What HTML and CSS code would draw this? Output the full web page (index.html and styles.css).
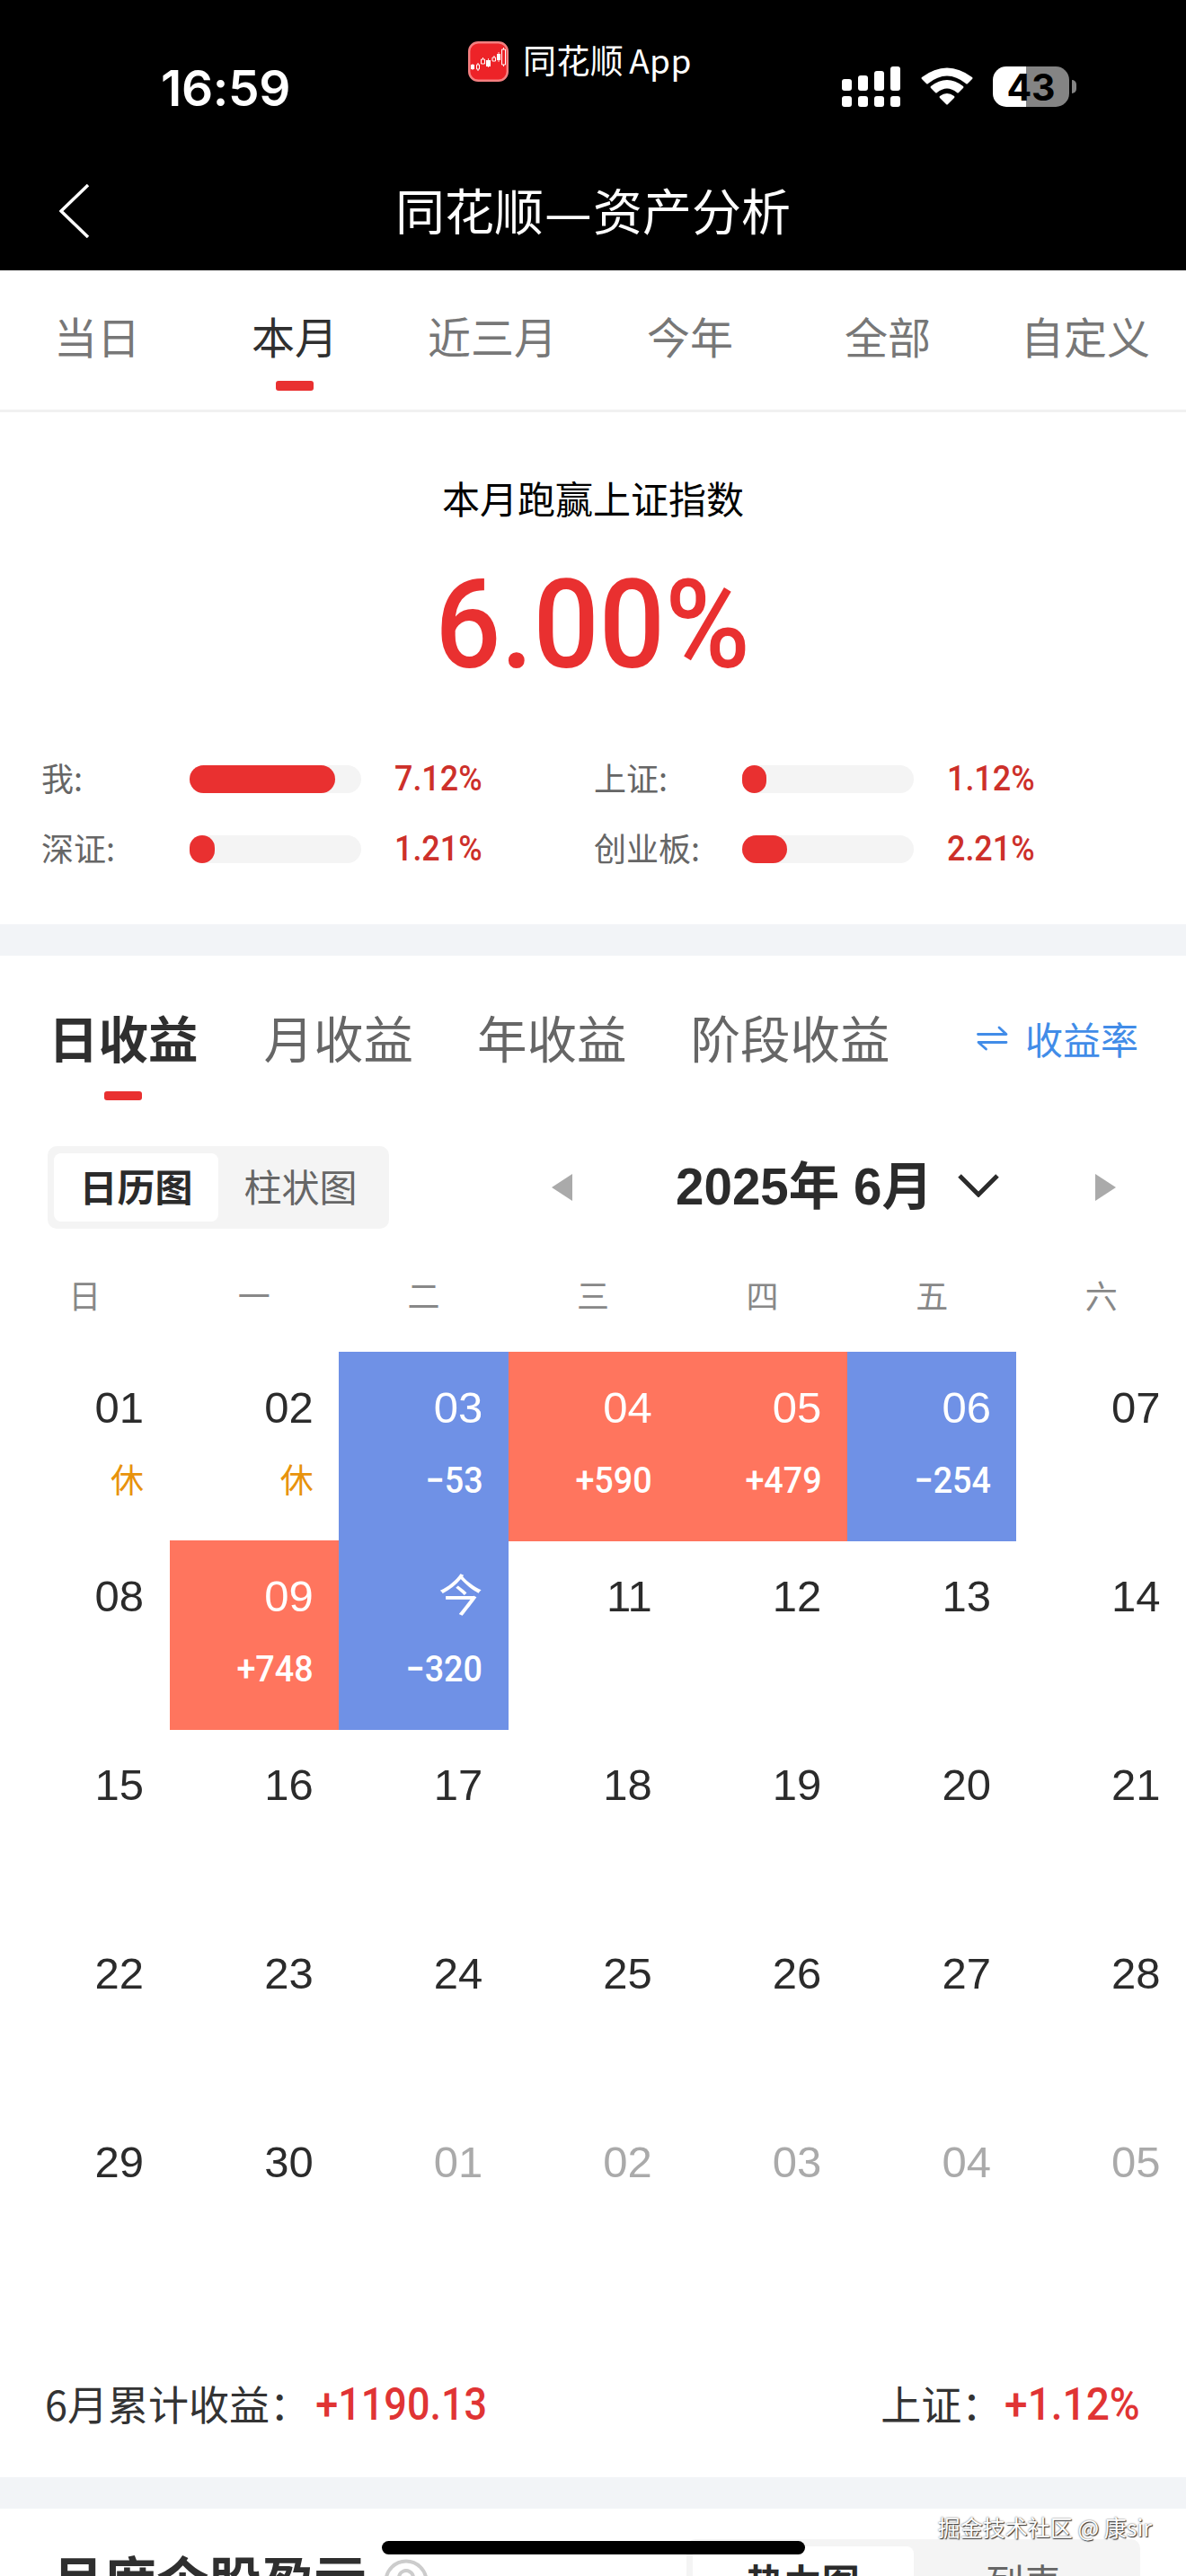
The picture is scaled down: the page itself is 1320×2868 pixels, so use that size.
FILE: index.html
```html
<!DOCTYPE html>
<html lang="zh-CN">
<head>
<meta charset="utf-8">
<title>同花顺—资产分析</title>
<link rel="stylesheet" href="styles.css">
</head>
<body>
<div class="screen">
  <header class="top">
    <div class="status">
      <div class="clock">16:59</div>
      <div class="island">
        <svg class="app-logo" viewBox="0 0 45 45">
          <rect x="1.2" y="1.2" width="42.6" height="42.6" rx="10" fill="#ed2328" stroke="#f47f80" stroke-width="2.4"/>
          <g fill="#fff"><path d="M3 26h4v5H3zM20 21h5v7h-5zM32 14h4v7h-4z"/><path d="M5 25v7M22.500 19v10M34 12v11" stroke="#fff" stroke-width=".8"/></g>
          <g fill="none" stroke="#fff" stroke-width="1"><path d="M9.500 26h3v5h-3zM14.500 20h4v5h-4zM27 18h3.500v4h-3.500zM37.500 9h4v17h-4zM16.500 18v2M29 16v2M39.500 7v2M39.500 26v2M11 24v2M11 31v2"/></g>
        </svg>
        <span>同花顺<i class="thin"></i>App</span>
      </div>
      <div class="indicators">
        <svg class="signal" viewBox="0 0 65 45" fill="#fff">
          <rect x="0" y="14" width="11" height="13" rx="3"/><rect x="18" y="10" width="11" height="17" rx="3"/><rect x="36" y="5" width="11" height="22" rx="3"/><rect x="54" y="0" width="11" height="27" rx="3"/>
          <rect x="0" y="33" width="11" height="12" rx="3"/><rect x="18" y="33" width="11" height="12" rx="3"/><rect x="36" y="33" width="11" height="12" rx="3"/><rect x="54" y="33" width="11" height="12" rx="3"/>
        </svg>
        <svg class="wifi" viewBox="0 0 58 42" fill="#fff">
          <path d="M1 11Q29-10 57 11Q58 12 57 13L52 18Q51 19 50 18Q29 1 8 18Q7 19 6 18L1 13Q0 12 1 11Z"/>
          <path d="M11 21Q29 7 47 21Q48 22 47 23L42 28Q41 29 40 28Q29 19 18 28Q17 29 16 28L11 23Q10 22 11 21Z"/>
          <path d="M21 32Q29 26 37 32Q38 33 37 34L30 41Q29 42 28 41L21 34Q20 33 21 32Z"/>
        </svg>
        <div class="battery"><span class="battery-body">43</span><i class="battery-tip"></i></div>
      </div>
    </div>
    <div class="navbar">
      <svg class="back" viewBox="0 0 34 60"><path d="M32 1L2 30L32 59" fill="none" stroke="#fff" stroke-width="3.5"/></svg>
      <h1>同花顺<span class="dash">—</span>资产分析</h1>
    </div>
  </header>

  <nav class="ranges">
    <span>当日</span><span class="on">本月</span><span>近三月</span><span>今年</span><span>全部</span><span>自定义</span>
  </nav>

  <section class="summary">
    <div class="summary-title">本月跑赢上证指数</div>
    <div class="summary-value"><span class="num">6.00%</span></div>
    <div class="bars">
      <div class="bar"><span class="bar-name">我:</span><div class="track"><i style="width:162px"></i></div><span class="num">7.12%</span></div>
      <div class="bar"><span class="bar-name">上证:</span><div class="track"><i style="width:27px"></i></div><span class="num">1.12%</span></div>
      <div class="bar"><span class="bar-name">深证:</span><div class="track"><i style="width:28px"></i></div><span class="num">1.21%</span></div>
      <div class="bar"><span class="bar-name">创业板:</span><div class="track"><i style="width:50px"></i></div><span class="num">2.21%</span></div>
    </div>
  </section>

  <section class="profit">
    <div class="tabs">
      <span class="on">日收益</span><span>月收益</span><span>年收益</span><span>阶段收益</span>
      <a class="switch"><svg viewBox="0 0 36 28"><path d="M1.500 9.500H33L25 2M33 18.500H2L10.500 26" fill="none" stroke="#418ce8" stroke-width="2.8" stroke-linecap="round" stroke-linejoin="round"/></svg>收益率</a>
    </div>
    <div class="controls">
      <div class="segment"><span class="on">日历图</span><span>柱状图</span></div>
      <div class="month">
        <svg class="tri" viewBox="0 0 23 30"><path d="M23 0V30L0 15Z" fill="#aaa"/></svg>
        <div class="month-name">2025年 6月<svg viewBox="0 0 46 26"><path d="M2 2L23 23L44 2" fill="none" stroke="#2b2b2b" stroke-width="5"/></svg></div>
        <svg class="tri" viewBox="0 0 23 30"><path d="M0 0V30L23 15Z" fill="#aaa"/></svg>
      </div>
    </div>
    <div class="week"><span>日</span><span>一</span><span>二</span><span>三</span><span>四</span><span>五</span><span>六</span></div>
    <div class="days">
      <div class="day"><b>01</b><em>休</em></div>
      <div class="day"><b>02</b><em>休</em></div>
      <div class="day down"><b>03</b><span class="num">−53</span></div>
      <div class="day up"><b>04</b><span class="num">+590</span></div>
      <div class="day up"><b>05</b><span class="num">+479</span></div>
      <div class="day down"><b>06</b><span class="num">−254</span></div>
      <div class="day"><b>07</b></div>
      <div class="day"><b>08</b></div>
      <div class="day up"><b>09</b><span class="num">+748</span></div>
      <div class="day down"><b>今</b><span class="num">−320</span></div>
      <div class="day"><b>11</b></div>
      <div class="day"><b>12</b></div>
      <div class="day"><b>13</b></div>
      <div class="day"><b>14</b></div>
      <div class="day"><b>15</b></div>
      <div class="day"><b>16</b></div>
      <div class="day"><b>17</b></div>
      <div class="day"><b>18</b></div>
      <div class="day"><b>19</b></div>
      <div class="day"><b>20</b></div>
      <div class="day"><b>21</b></div>
      <div class="day"><b>22</b></div>
      <div class="day"><b>23</b></div>
      <div class="day"><b>24</b></div>
      <div class="day"><b>25</b></div>
      <div class="day"><b>26</b></div>
      <div class="day"><b>27</b></div>
      <div class="day"><b>28</b></div>
      <div class="day"><b>29</b></div>
      <div class="day"><b>30</b></div>
      <div class="day off"><b>01</b></div>
      <div class="day off"><b>02</b></div>
      <div class="day off"><b>03</b></div>
      <div class="day off"><b>04</b></div>
      <div class="day off"><b>05</b></div>
    </div>
    <div class="totals">
      <div><span>6月累计收益：</span><span class="num">+1190.13</span></div>
      <div><span>上证：</span><span class="num index-total">+1.12%</span></div>
    </div>
  </section>

  <section class="stocks">
    <h2>月度个股盈亏</h2>
    <svg class="help" viewBox="0 0 50 50" fill="none" stroke="#ccc" stroke-width="4"><circle cx="25" cy="25" r="22.500"/><path d="M17 21a8 8 0 1 1 12 7q-4 2-4 6M25 37v4"/></svg>
    <div class="segment stock-segment"><span class="on">热力图</span><span>列表</span></div>
  </section>
  <div class="home-bar"></div>
  <div class="watermark">掘金技术社区 @ 康sir</div>
</div>
</body>
</html>
```
FILE: styles.css
```css
* { box-sizing: border-box; }
body { margin: 0; background: #fff; }
.screen {
  position: relative;
  width: 1320px;
  height: 2868px;
  overflow: hidden;
  background: #fff;
  color: #666;
  font-family: "Liberation Sans", "Noto Sans CJK SC", sans-serif;
  display: flex;
  flex-direction: column;
}
.screen > * { flex-shrink: 0; }
svg { display: block; flex: none; }
span, a, h1, h2 { white-space: nowrap; }
.num { font-family: Roboto, "Noto Sans CJK SC", sans-serif; font-weight: 500; display: inline-block; }

.top { height: 301px; background: #000; color: #fff; }
.status { height: 170px; display: grid; grid-template-columns: 521px 1fr 385px; }
.clock { padding: 65px 0 0 179px; font: 600 55px/66px Inter, sans-serif; letter-spacing: -.3px; }
.island { display: flex; align-items: center; gap: 16px; height: 46px; margin-top: 45px; font: 37px/46px "Noto Sans CJK SC", sans-serif; }
.island span { margin-top: -4px; letter-spacing: .4px; }
.thin { display: inline-block; width: 6px; }
.app-logo { width: 45px; height: 45px; }
.indicators { display: flex; align-items: flex-start; padding-top: 74px; padding-left: 2px; }
.signal { width: 65px; height: 45px; }
.wifi { width: 58px; height: 42px; margin: 1px 22px 0 23px; }
.battery { display: flex; align-items: center; gap: 3px; }
.battery-body { width: 85px; height: 45px; border-radius: 15px; background: linear-gradient(90deg, #fff 37px, #848484 37px); color: #000; font: 700 41px/46px Inter, sans-serif; text-align: center; }
.battery-tip { width: 5px; height: 15px; border-radius: 0 5px 5px 0; background: #848484; }
.navbar { position: relative; height: 131px; display: flex; justify-content: center; }
.back { position: absolute; left: 66px; top: 35px; width: 34px; height: 60px; }
h1 { margin: 22px 0 0; font: 400 55px/80px "Noto Sans CJK SC", sans-serif; }
.dash { display: inline-block; font-family: "Liberation Sans", sans-serif; transform: scaleX(.86); }

.ranges { height: 158px; border-bottom: 3px solid #f1f1f1; display: grid; grid-template-columns: repeat(6, 220px); text-align: center; font: 48px/70px "Noto Sans CJK SC", sans-serif; padding-top: 37px; color: #777; margin-left: -2px; width: 1322px; }
.ranges .on, .tabs .on { color: #2f2f2f; display: flex; flex-direction: column; align-items: center; }
.ranges .on::after, .tabs .on::after { content: ""; width: 42px; height: 11px; border-radius: 3px; background: #e93030; }
.ranges .on::after { margin-top: 16px; }

.summary { height: 570px; padding-top: 65px; font-family: "Noto Sans CJK SC", sans-serif; }
.summary-title { font-size: 42px; line-height: 60px; color: #000; text-align: center; }
.summary-value { height: 160px; margin-top: 19px; text-align: center; font-size: 138px; line-height: 160px; color: #e93030; }
.summary-value .num { transform: scaleX(.935); }
.bars { display: grid; grid-template-columns: 615px 615px; grid-auto-rows: 78px; margin: 73px 0 0 46px; }
.bar { display: flex; align-items: center; height: 62px; font-size: 36px; color: #666; }
.bar-name { width: 165px; margin-top: -4px; }
.track { width: 191px; height: 31px; border-radius: 16px; background: #f4f4f4; margin-right: 37px; }
.track i { display: block; height: 31px; border-radius: 16px; background: #e93030; }
.bar .num { font-size: 39px; color: #cd302a; transform: scaleX(.92); transform-origin: left; }

.profit { border-top: 35px solid #f2f4f7; height: 1729px; }
.tabs { height: 212px; padding: 52px 53px 0 54px; display: flex; font: 55.5px/76px "Noto Sans CJK SC", sans-serif; }
.tabs > span { margin-right: 71px; }
.tabs > .on { margin-right: 73px; font-weight: 700; }
.tabs > span:last-of-type { margin-right: 0; }
.tabs .on::after { margin-top: 23px; height: 10px; }
.switch { margin-left: auto; display: flex; align-items: center; height: 80px; gap: 18px; font-size: 42px; color: #418ce8; }
.switch svg { width: 36px; height: 28px; }
.controls { display: flex; align-items: flex-start; justify-content: space-between; height: 126px; padding: 0 78px 0 53px; }
.segment { display: flex; width: 380px; height: 92px; padding: 8px 7px; border-radius: 10px; background: #f4f4f4; font: 42px/72px "Noto Sans CJK SC", sans-serif; }
.segment span { flex: 1; text-align: center; }
.segment .on { border-radius: 8px; background: #fff; color: #2b2b2b; font-weight: 700; }
.month { display: flex; align-items: center; justify-content: space-between; width: 628px; height: 92px; }
.tri { width: 23px; height: 30px; }
.month-name { display: flex; align-items: center; gap: 28px; padding-left: 8px; font: 700 56.5px/92px "Liberation Sans", "Noto Sans CJK SC", sans-serif; color: #2b2b2b; white-space: nowrap; }
.month-name svg { width: 46px; height: 26px; margin-top: -4px; }
.week { display: grid; grid-template-columns: repeat(7, 1fr); height: 103px; padding-top: 14px; text-align: center; font: 36px/50px "Noto Sans CJK SC", sans-serif; color: #888; }
.days { display: grid; grid-template-columns: repeat(7, 1fr); grid-auto-rows: 210px; }
.day { height: 211px; padding: 32px 28.5px 0 0; display: flex; flex-direction: column; align-items: flex-end; color: #2b2b2b; }
.day b { font-weight: 400; font-size: 49px; line-height: 60px; height: 60px; }
.day em { font: 37px/54px "Noto Sans CJK SC", sans-serif; color: #e8930c; margin-top: 22px; }
.day .num { font-size: 41px; line-height: 54px; margin-top: 24px; transform: scaleX(.92); transform-origin: right; }
.up { background: #ff755e; color: #fff; }
.down { background: #6f91e6; color: #fff; }
.off { color: #aaa; }
.totals { display: flex; justify-content: space-between; padding: 81px 51px 0 50px; font: 45px/80px "Noto Sans CJK SC", sans-serif; color: #333; }
.totals div { display: flex; }
.totals .num { font-size: 50px; line-height: 82px; color: #e03434; transform: scaleX(.9); transform-origin: right; margin-left: -15px; }
.totals .index-total { margin-left: -10px; transform: scaleX(.92); }

.stocks { height: 110px; border-top: 35px solid #f2f4f7; display: flex; padding: 0 51px 0 57px; align-items: flex-start; }
h2 { margin: 35px 0 0; font: 700 58.5px/84px "Noto Sans CJK SC", sans-serif; color: #2f2f2f; }
.help { width: 50px; height: 50px; margin: 56px 0 0 19px; }
.stock-segment { width: 505px; margin: 34px 0 0 auto; }
.stock-segment span { line-height: 76px; }
.home-bar { position: absolute; left: 425px; top: 2829px; width: 471px; height: 15px; border-radius: 8px; background: #000; }
.watermark { position: absolute; right: 38px; top: 2795px; font: 25px/36px "Noto Sans CJK SC", sans-serif; color: #fff; text-shadow: 1px 1px 1px #333, 0 0 2px #555; white-space: nowrap; }
```
